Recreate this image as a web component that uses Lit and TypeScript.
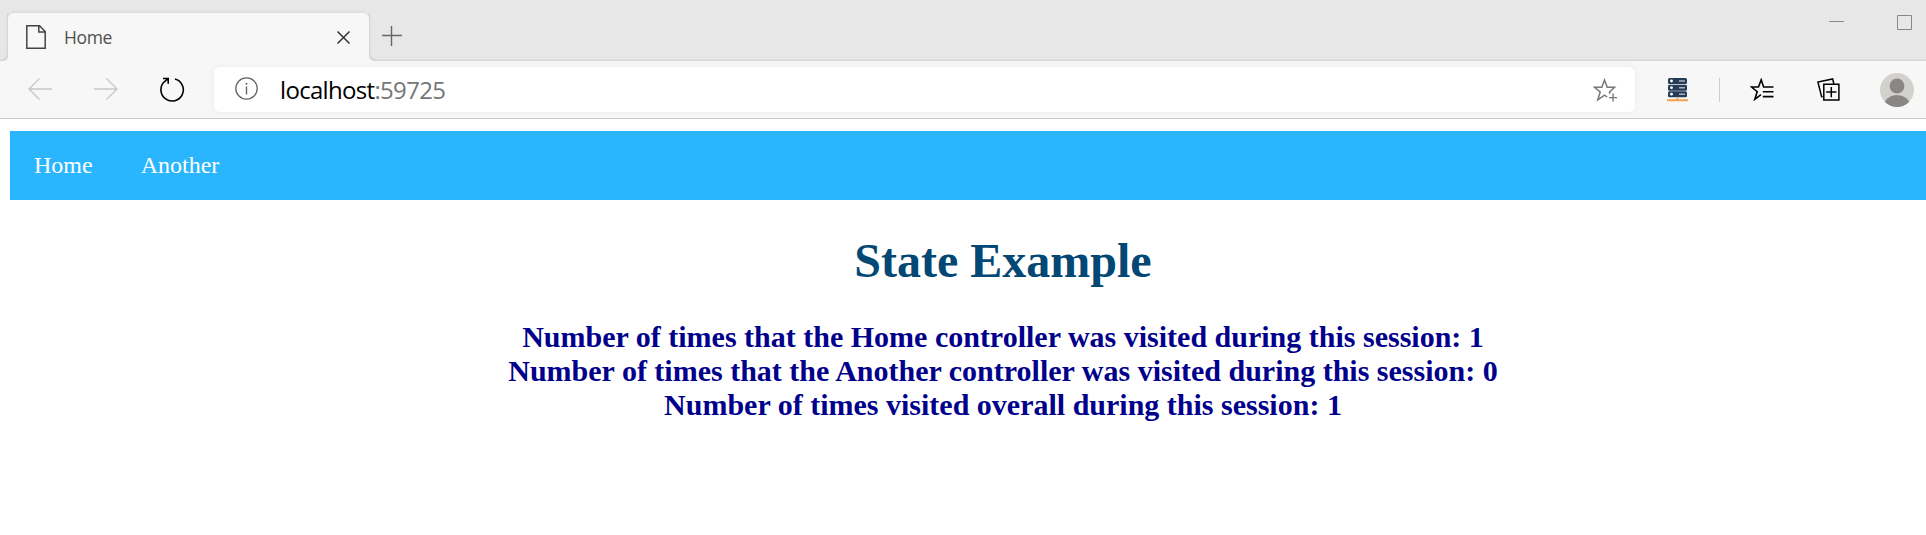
import { LitElement, html, css, svg } from "lit";
import { customElement } from "lit/decorators.js";

const icon = (width: number, height: number, body: unknown) => html`
  <svg width=${width} height=${height} viewBox="0 0 ${width} ${height}" fill="none">${body}</svg>
`;

@customElement("browser-tabs")
class BrowserTabs extends LitElement {
  static styles = css`
    :host { display: block; height: 61px; background: #f7f7f7; }
    svg { display: block; flex: none; }
    .strip { display: flex; flex-direction: column; height: 61px; }
    .top { display: flex; flex: none; height: 13px; box-sizing: border-box; background: #e7e7e7; padding-left: 12px; }
    .edge { width: 353px; background: linear-gradient(#e7e7e7 10px, #dadada 13px); }
    .row { display: flex; flex: 1; }
    .left { width: 8px; background: #e7e7e7; border-bottom-right-radius: 5px; box-shadow: inset -2px -2px 2px -1px #d0d0d0; }
    .slot { width: 361px; background: linear-gradient(#e0e0e0 8px, #f7f7f7 8px); }
    .tab { height: 48px; box-sizing: border-box; background: #f7f7f7; border-radius: 6px 6px 0 0; display: flex; align-items: center; padding: 0 19px 0 18px; }
    .title { flex: 1; margin-left: 18px; font: 400 17.5px/24px "Open Sans", sans-serif; color: #505050; letter-spacing: -0.35px; }
    .right { flex: 1; display: flex; background: #e7e7e7; border-bottom-left-radius: 6px; box-shadow: inset 2px -2px 2px -1px #d0d0d0; }
    .plus { margin: 13px 0 0 13px; }
    .min { margin: 8px 0 0 auto; }
    .max { margin: 2px 14px 0 53px; }
  `;

  render() {
    return html`
      <div class="strip">
        <div class="top"><div class="edge"></div></div>
        <div class="row">
          <div class="left"></div>
          <div class="slot">
            <div class="tab">
              ${icon(20, 24, svg`<path d="M.8.8H13.5L19.2 6.5V23.2H.8Z M12.8.8V7H19.2" stroke="#444" stroke-width="1.5"/>`)}
              <span class="title">Home</span>
              ${icon(13, 13, svg`<path d="M.5.5 12.5 12.5M12.5.5.5 12.5" stroke="#333" stroke-width="1.5"/>`)}
            </div>
          </div>
          <div class="right">
            <div class="plus">${icon(20, 20, svg`<path d="M0 9.5H20M9.5 0V20" stroke="#666" stroke-width="1.4"/>`)}</div>
            <div class="min">${icon(15, 1, svg`<path d="M0 .5H15" stroke="#888"/>`)}</div>
            <div class="max">${icon(15, 15, svg`<path d="M.5.5H14.5V14.5H.5Z" stroke="#888"/>`)}</div>
          </div>
        </div>
      </div>
    `;
  }
}

@customElement("browser-toolbar")
class BrowserToolbar extends LitElement {
  static styles = css`
    :host { display: block; }
    svg { display: block; flex: none; }
    .bar { display: flex; align-items: center; height: 58px; box-sizing: border-box; background: #f7f7f7; border-bottom: 1px solid #ccc; padding: 0 12px 0 28px; }
    .nav { display: flex; align-items: center; gap: 42px; padding-bottom: 1px; width: 186px; }
    .address { flex: none; width: 1421px; height: 45px; box-sizing: border-box; display: flex; align-items: center; padding: 0 18px 0 21px; background: #fff; border-radius: 6px; box-shadow: 0 0 6px rgba(0, 0, 0, 0.06); }
    .info { margin-bottom: 2px; }
    .url { flex: 1; margin: 1px 0 0 22px; font: 400 24px/32px "Open Sans", sans-serif; color: #000; letter-spacing: -0.68px; white-space: nowrap; }
    .port { color: #767676; }
    .server { margin-left: 32px; }
    .divider { width: 1px; height: 24px; background: #ccc; margin-left: 31px; }
    .fav { margin-left: 30px; }
    .coll { margin-left: 43px; }
    .avatar { margin-left: auto; }
  `;

  render() {
    return html`
      <div class="bar">
        <div class="nav">
          ${icon(24, 22, svg`<path d="M24 11H1M11.5.5 1 11 11.5 21.5" stroke="#c8c8c8" stroke-width="1.4"/>`)}
          ${icon(24, 22, svg`<path d="M0 11H23M12.5.5 23 11 12.5 21.5" stroke="#c8c8c8" stroke-width="1.4"/>`)}
          ${icon(25, 25, svg`<path d="M15 2A11.2 11.2 0 1 1 4.3 4.8L8.2 1.5M3 1.5H8.2V6.8" stroke="#000" stroke-width="1.6"/>`)}
        </div>
        <div class="address">
          <div class="info">
            ${icon(23, 23, svg`<circle cx="11.5" cy="11.5" r="10.7" stroke="#666" stroke-width="1.3"/><path d="M11.5 9.5V17.5" stroke="#666" stroke-width="1.4"/><circle cx="11.5" cy="6.8" r="1" fill="#666"/>`)}
          </div>
          <span class="url">localhost<span class="port">:59725</span></span>
          ${icon(24, 24, svg`<path d="M17 15.8 16.5 13.9 21.6 9.3H14.2L11.5 2 8.8 9.3H1.5L7.2 14 4.8 21.8 11.5 17.2 14.2 19" stroke="#777" stroke-width="1.5"/><path d="M16 19.6H24M20 15.6V23.6" stroke="#777" stroke-width="1.4"/>`)}
        </div>
        <div class="server">
          ${icon(21, 24, svg`
            <g fill="#253b56"><rect x="1" y="0" width="19" height="6" rx="1.5"/><rect x="1" y="6.7" width="19" height="6" rx="1.5"/><rect x="1" y="13.2" width="19" height="6" rx="1.5"/></g>
            <g fill="#fff"><circle cx="4.5" cy="3" r="1.4"/><circle cx="4.5" cy="9.7" r="1.4"/><circle cx="4.5" cy="16.2" r="1.4"/></g>
            <path d="M12 3H18M12 9.7H18M12 16.2H18" stroke="#a9b4c0" stroke-width="1.4"/>
            <path d="M0 22.2H21M10.5 20V22" stroke="#f5a04c" stroke-width="2"/>`)}
        </div>
        <div class="divider"></div>
        <div class="fav">
          ${icon(24, 23, svg`<path d="M14.8 9H13.6L11.2 1.8 8.5 9H1.5L7.2 13.7 4.8 21.3 11 16.6M13.3 9H23.5M12.8 13.7H23.5M12.8 18.6H23.5" stroke="#000" stroke-width="1.6"/>`)}
        </div>
        <div class="coll">
          ${icon(23, 23, svg`<path d="M5.7 18.5 4.6 18.7.9 4 15.6.9 16.8 5.5M6.8 6.3H21.9V21.9H6.8ZM14.3 8.9V19.2M9.2 14H19.4" stroke="#000" stroke-width="1.5"/>`)}
        </div>
        <div class="avatar">
          ${icon(34, 34, svg`
            <clipPath id="disc"><circle cx="17" cy="17" r="17"/></clipPath>
            <circle cx="17" cy="17" r="17" fill="#d3d1ce"/>
            <circle cx="17" cy="13" r="7.4" fill="#8a8683"/>
            <ellipse cx="17" cy="32" rx="12.8" ry="10" fill="#8a8683" clip-path="url(#disc)"/>`)}
        </div>
      </div>
    `;
  }
}

@customElement("app-root")
class AppRoot extends LitElement {
  static styles = css`
    :host { display: block; height: 535px; overflow: hidden; background: #fff; font-family: "Liberation Serif", serif; }
    .page { width: 1986px; padding: 12px 0 0 10px; }
    .menu { display: flex; align-items: center; height: 69px; box-sizing: border-box; background: #2ab5ff; }
    .link { padding: 0 24px; font-size: 24px; line-height: 27px; color: #fff; text-decoration: none; }
    .heading { margin: 33px 0 0; font-size: 48px; line-height: 55px; text-align: center; color: #034775; }
    .counts { margin: 32px 0 0; font-size: 30px; line-height: 34px; font-weight: bold; text-align: center; color: #00008b; }
  `;

  render() {
    const lines = [
      "Number of times that the Home controller was visited during this session: 1",
      "Number of times that the Another controller was visited during this session: 0",
      "Number of times visited overall during this session: 1",
    ];
    return html`
      <browser-tabs></browser-tabs>
      <browser-toolbar></browser-toolbar>
      <main class="page">
        <nav class="menu"><a class="link">Home</a><a class="link">Another</a></nav>
        <h1 class="heading">State Example</h1>
        <div class="counts">${lines.map((line) => html`<div>${line}</div>`)}</div>
      </main>
    `;
  }
}
